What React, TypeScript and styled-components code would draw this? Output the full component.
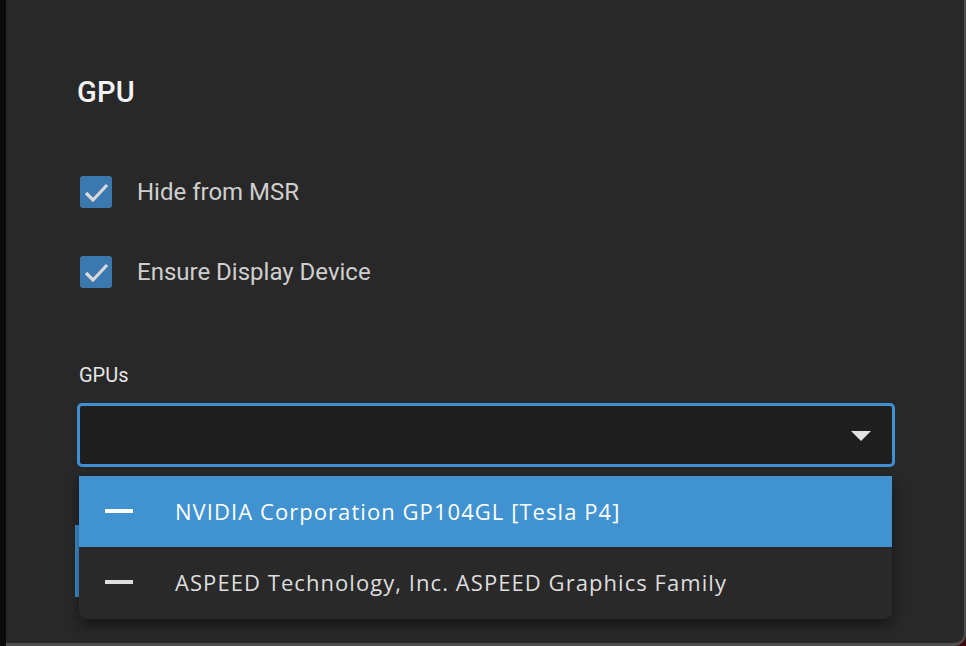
import React from "react";
import styled, { createGlobalStyle } from "styled-components";

const Global = createGlobalStyle`
  html, body { margin: 0; padding: 0; background: #0b0b0b; }
  body { font-family: Roboto, "Liberation Sans", sans-serif; overflow: hidden; }
`;

const Screen = styled.div`
  display: flex;
  width: 966px;
  height: 646px;
  background: #3a0a0a;
`;

const SideStrip = styled.div`
  width: 6px;
  flex: none;
  background: #0b0b0b;
`;

const Panel = styled.div`
  flex: 1;
  display: flex;
  flex-direction: column;
  box-sizing: border-box;
  height: 646px;
  padding: 0 69px 0 71px;
  background: #282828;
  border-right: 2px solid #4e4e4e;
  border-bottom: 3px solid #4e4e4e;
  border-bottom-right-radius: 12px;
`;

const Title = styled.h2`
  margin: 75px 0 0 0;
  font-size: 29px;
  line-height: 34px;
  font-weight: 500;
  color: #f4f4f4;
  letter-spacing: 0.3px;
`;

const CheckRow = styled.label<{ $top: number }>`
  display: flex;
  align-items: center;
  gap: 25px;
  height: 32px;
  margin-top: ${(p) => p.$top}px;
  padding-left: 3px;
`;

const Box = styled.span`
  width: 32px;
  height: 32px;
  flex: none;
  border-radius: 3px;
  background: #3b78ad;
  display: flex;
  align-items: center;
  justify-content: center;
`;

const CheckText = styled.span`
  font-size: 24px;
  line-height: 30px;
  color: #cfcfcf;
`;

const FieldLabel = styled.div`
  margin-top: 75px;
  padding-left: 2px;
  font-size: 20px;
  line-height: 24px;
  color: #e6e6e6;
`;

const SelectWrap = styled.div`
  position: relative;
  margin-top: 16px;
`;

const SelectBox = styled.div`
  box-sizing: border-box;
  height: 64px;
  border: 3px solid #3f8fd2;
  border-radius: 5px;
  background: #1f1f1f;
  display: flex;
  align-items: center;
  justify-content: flex-end;
  padding-right: 21px;
`;

const Caret = styled.span`
  width: 0;
  height: 0;
  border-left: 10px solid transparent;
  border-right: 10px solid transparent;
  border-top: 10px solid #e2e2e2;
  margin-top: 2px;
`;

const HiddenButton = styled.div`
  margin: 58px 0 0 -2px;
  width: 220px;
  height: 72px;
  background: #3f8fd0;
`;

const Menu = styled.ul`
  position: absolute;
  top: calc(100% + 9px);
  left: 2px;
  right: 3px;
  margin: 0;
  padding: 0;
  list-style: none;
  background: #292929;
  border-radius: 0 0 8px 8px;
  overflow: hidden;
  box-shadow: 0 6px 14px rgba(0, 0, 0, 0.45);
  z-index: 2;
`;

const Item = styled.li<{ $active?: boolean; $h: number }>`
  display: flex;
  align-items: center;
  gap: 42px;
  height: ${(p) => p.$h}px;
  padding-left: 26px;
  padding-bottom: 2px;
  box-sizing: border-box;
  background: ${(p) => (p.$active ? "#4192d0" : "transparent")};
  color: ${(p) => (p.$active ? "#ffffff" : "#dedede")};
  font-family: "Open Sans", "Noto Sans", sans-serif;
  font-size: 22px;
  letter-spacing: 1.06px;
`;

const Dash = styled.span<{ $active?: boolean }>`
  width: 28px;
  height: 4px;
  flex: none;
  background: ${(p) => (p.$active ? "#ffffff" : "#dedede")};
`;

const Check = () => (
  <svg width="32" height="32" viewBox="0 0 32 32">
    <path d="M6 17 L13 24 L27 9" fill="none" stroke="#d9d9d9" strokeWidth="3.2" strokeLinecap="butt" strokeLinejoin="miter" />
  </svg>
);

export default function App() {
  return (
    <>
      <Global />
      <Screen>
        <SideStrip />
        <Panel>
          <Title>GPU</Title>
          <CheckRow $top={67}>
            <Box><Check /></Box>
            <CheckText>Hide from MSR</CheckText>
          </CheckRow>
          <CheckRow $top={48}>
            <Box><Check /></Box>
            <CheckText>Ensure Display Device</CheckText>
          </CheckRow>
          <FieldLabel>GPUs</FieldLabel>
          <SelectWrap>
            <SelectBox>
              <Caret />
            </SelectBox>
            <Menu>
              <Item $active $h={71}>
                <Dash $active />
                NVIDIA Corporation GP104GL [Tesla P4]
              </Item>
              <Item $h={72}>
                <Dash />
                ASPEED Technology, Inc. ASPEED Graphics Family
              </Item>
            </Menu>
          </SelectWrap>
          <HiddenButton />
        </Panel>
      </Screen>
    </>
  );
}
